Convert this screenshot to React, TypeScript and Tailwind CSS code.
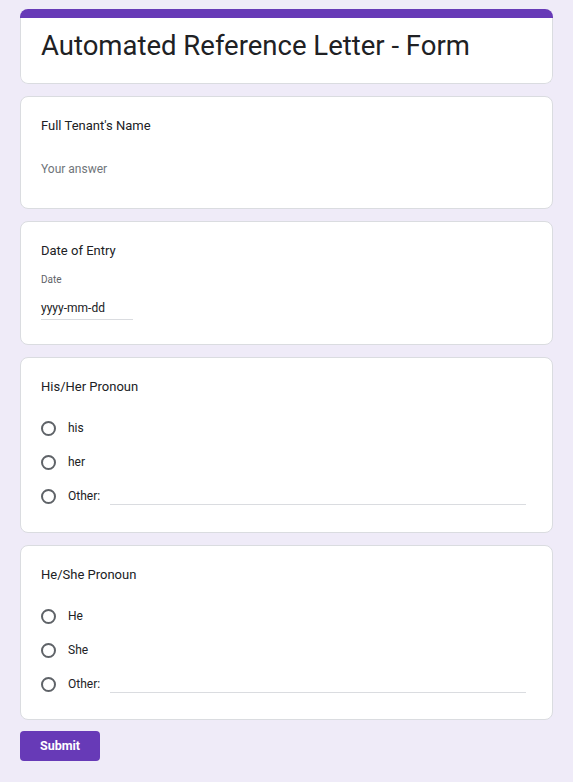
import React from "react";

const font = { fontFamily: "Roboto, 'Noto Sans', Arial, sans-serif" };

function Card({ children, className = "" }: { children: React.ReactNode; className?: string }) {
  return (
    <div className={`bg-white border border-[#dadce0] rounded-lg px-5 ${className}`}>
      {children}
    </div>
  );
}

function Radio({ label, other }: { label: string; other?: boolean }) {
  return (
    <div className="h-[34px] flex items-center">
      <span className="w-[15px] h-[15px] rounded-full border-2 border-[#5f6368] shrink-0" />
      <span className="ml-[12px] text-[12px] text-[#202124]">{label}</span>
      {other && <span className="ml-[10px] mr-[6px] flex-1 self-end mb-[8px] border-b border-[#dadce0]" />}
    </div>
  );
}

function ChoiceCard({ title, options, className }: { title: string; options: string[]; className: string }) {
  return (
    <Card className={`pt-[19px] ${className}`}>
      <div className="text-[13px] leading-5 text-[#202124]">{title}</div>
      <div className="mt-[14px] flex flex-col">
        {options.map((o) => (
          <Radio key={o} label={o} />
        ))}
        <Radio label="Other:" other />
      </div>
    </Card>
  );
}

export default function App() {
  return (
    <div className="min-h-screen bg-[#efebf8] px-5 pt-[9px] pb-10 flex flex-col" style={font}>
      <div className="rounded-lg overflow-hidden">
        <div className="h-[9px] bg-[#673ab7]" />
        <div className="bg-white border-x border-b border-[#dadce0] rounded-b-lg px-5 pt-[10px] pb-[20px]">
          <h1 className="text-[27.5px] leading-[35px] text-[#202124]">Automated Reference Letter - Form</h1>
        </div>
      </div>

      <div className="mt-3 flex flex-col gap-3">
        <Card className="pt-[19px] pb-[31px]">
          <div className="text-[13px] leading-5 text-[#202124]">Full Tenant's Name</div>
          <div className="mt-[25px] text-[12px] leading-4 text-[#70757a]">Your answer</div>
        </Card>

        <Card className="pt-[19px] pb-6">
          <div className="text-[13px] leading-5 text-[#202124]">Date of Entry</div>
          <div className="mt-[13px] text-[10px] leading-3 text-[#5f6368]">Date</div>
          <div className="mt-[14px] w-[92px] pb-[3px] border-b border-[#dadce0] text-[12px] leading-4 text-[#202124]">
            yyyy-mm-dd
          </div>
        </Card>

        <ChoiceCard title="His/Her Pronoun" options={["his", "her"]} className="pb-[19px]" />
        <ChoiceCard title="He/She Pronoun" options={["He", "She"]} className="pb-[18px]" />
      </div>

      <div className="mt-[11px]">
        <button className="w-20 h-[30px] rounded bg-[#673ab7] text-white text-[12.5px] font-bold">Submit</button>
      </div>

      <div className="mt-[18px] text-[11px] leading-4 text-[#202124]">Never submit passwords through Google Forms.</div>
    </div>
  );
}
